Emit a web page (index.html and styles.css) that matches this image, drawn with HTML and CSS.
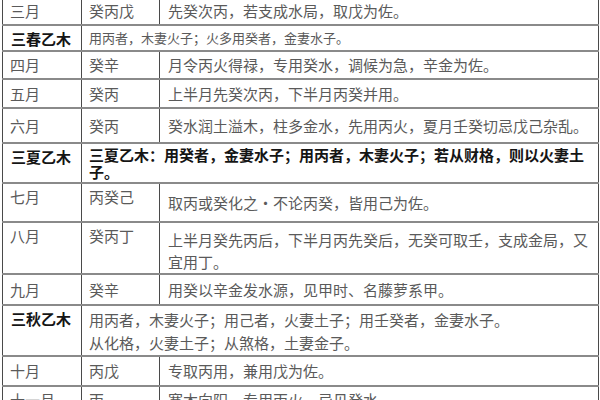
FILE: index.html
```html
<!DOCTYPE html>
<html lang="zh-CN">
<head>
<meta charset="utf-8">
<title>乙木调候表</title>
<link rel="stylesheet" href="styles.css">
</head>
<body>
<div class="page">
<table class="grid">
<colgroup><col class="c1"><col class="c2"><col class="c3"></colgroup>
<tbody>
<tr class="h29"><td>三月</td><td>癸丙戊</td><td class="desc">先癸次丙，若支成水局，取戊为佐。</td></tr>
<tr class="h24"><th>三春乙木</th><td colspan="2" class="small">用丙者，木妻火子；火多用癸者，金妻水子。</td></tr>
<tr class="h28"><td>四月</td><td>癸辛</td><td class="desc">月令丙火得禄，专用癸水，调候为急，辛金为佐。</td></tr>
<tr class="h29"><td>五月</td><td>癸丙</td><td class="desc">上半月先癸次丙，下半月丙癸并用。</td></tr>
<tr class="h35"><td>六月</td><td>癸丙</td><td class="desc">癸水润土溢木，柱多金水，先用丙火，夏月壬癸切忌戊己杂乱。</td></tr>
<tr class="h40"><th>三夏乙木</th><td colspan="2" class="strong">三夏乙木：用癸者，金妻水子；用丙者，木妻火子；若从财格，则以火妻土子。</td></tr>
<tr class="h39"><td class="top">七月</td><td class="top">丙癸己</td><td class="desc">取丙或癸化之・不论丙癸，皆用己为佐。</td></tr>
<tr class="h48"><td class="top">八月</td><td class="top">癸丙丁</td><td class="desc low">上半月癸先丙后，下半月丙先癸后，无癸可取壬，支成金局，又宜用丁。</td></tr>
<tr class="h31"><td>九月</td><td>癸辛</td><td class="desc">用癸以辛金发水源，见甲时、名藤萝系甲。</td></tr>
<tr class="h51"><th>三秋乙木</th><td colspan="2" class="wide">用丙者，木妻火子；用己者，火妻土子；用壬癸者，金妻水子。<br>从化格，火妻土子；从煞格，土妻金子。</td></tr>
<tr class="h30"><td>十月</td><td>丙戊</td><td class="desc">专取丙用，兼用戊为佐。</td></tr>
<tr class="h30"><td class="top">十一月</td><td class="top">丙</td><td class="desc top">寒木向阳，专用丙火，忌见癸水。</td></tr>
</tbody>
</table>
</div>
</body>
</html>
```

FILE: styles.css
```css
html, body {
  margin: 0;
  padding: 0;
  background: #ffffff;
}

body {
  width: 600px;
  height: 400px;
  overflow: hidden;
  font-family: "Noto Sans CJK SC", "Noto Sans", sans-serif;
  color: #5a5a5a;
}

.page {
  padding: 0 2px;
}

.grid {
  border-collapse: collapse;
  table-layout: fixed;
  width: 596px;
  margin-top: -5px;
}

.c1 { width: 79px; }
.c2 { width: 78px; }
.c3 { width: 439px; }

.grid td,
.grid th {
  box-sizing: border-box;
  border-left: 1px solid #4a4a4a;
  border-right: 1px solid #4a4a4a;
  border-top: 2px solid #8a8a8a;
  border-bottom: 2px solid #8a8a8a;
  padding: 0 6px 0 7px;
  font-size: 15px;
  line-height: 22px;
  font-weight: normal;
  text-align: left;
  vertical-align: middle;
}

.grid th {
  font-weight: bold;
  color: #151515;
  padding-left: 8px;
  vertical-align: top;
  padding-top: 2px;
}

.grid td.desc {
  padding-left: 8px;
}

.grid td.small {
  font-size: 13px;
}

.grid td.strong {
  font-weight: bold;
  color: #151515;
  line-height: 17px;
}

.grid td.wide {
  line-height: 23px;
}

.grid td.top {
  vertical-align: top;
  padding-top: 2px;
}

.grid td.low {
  padding-top: 6px;
}

.h24 td, .h24 th { height: 24px; }
.h28 td, .h28 th { height: 28px; }
.h29 td, .h29 th { height: 29px; }
.h30 td, .h30 th { height: 30px; }
.h31 td, .h31 th { height: 31px; }
.h35 td, .h35 th { height: 35px; }
.h39 td, .h39 th { height: 39px; }
.h40 td, .h40 th { height: 40px; }
.h48 td, .h48 th { height: 48px; }
.h51 td, .h51 th { height: 51px; }
```
